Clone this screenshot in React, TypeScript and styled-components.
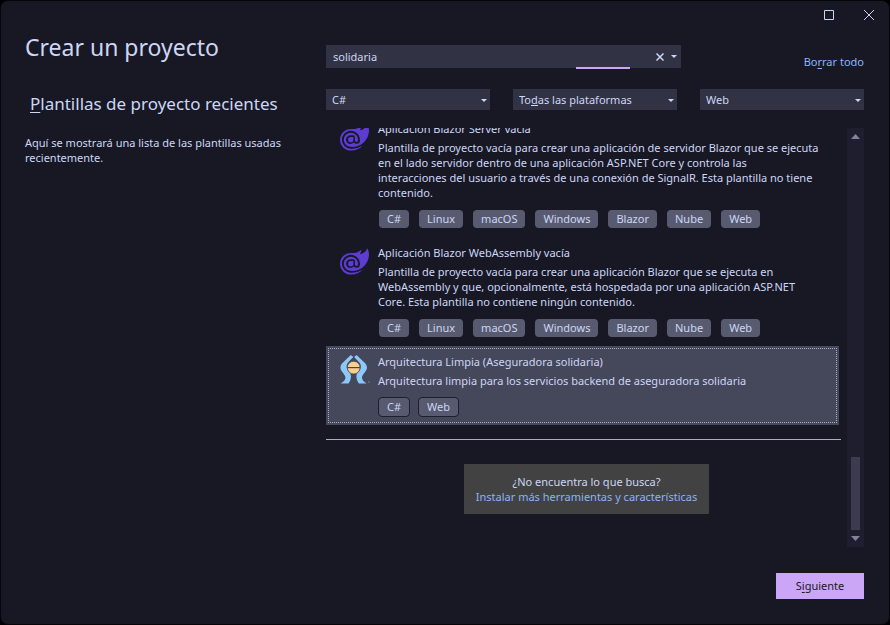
import React, { useState } from 'react';
import styled, { createGlobalStyle } from 'styled-components';
import { SiBlazor } from 'react-icons/si';

const color = {
  base: '#181825',
  track: '#1e1e2e',
  field: '#313244',
  selected: '#45475a',
  chip: '#585b70',
  text: '#cdd6f4',
  link: '#89b4fa',
  accent: '#cba6f7',
};

const GlobalStyle = createGlobalStyle`
  *, *::before, *::after { box-sizing: border-box; }
  body { margin: 0; background: #000; }
  body, button, input, select {
    font-family: "Noto Sans", "Open Sans", sans-serif;
    font-size: 11px;
    line-height: 15px;
    color: ${color.text};
  }
  button { border: 0; padding: 0; background: none; cursor: pointer; }
  h1, h2, h3, p, ul { margin: 0; padding: 0; font-weight: 400; }
`;

const Window = styled.div`
  display: flex;
  flex-direction: column;
  height: 100vh;
  background: ${color.base};
  border: 1px solid #05050a;
  border-radius: 8px;
  overflow: hidden;
`;

const TitleBar = styled.header`
  display: flex;
  justify-content: flex-end;
  height: 28px;
  flex: none;
`;

const WindowButton = styled.button`
  display: grid;
  place-items: center;
  width: 40px;
`;

const Body = styled.div`
  flex: 1;
  min-height: 0;
  display: grid;
  grid-template-columns: 301px minmax(0, 1fr);
  padding: 0 25px 0 24px;
`;

const Sidebar = styled.aside`
  padding-right: 24px;
`;

const Title = styled.h1`
  font-size: 23px;
  line-height: 32px;
  padding-top: 2px;
`;

const Subtitle = styled.h2`
  font-size: 17px;
  line-height: 24px;
  padding-left: 5px;
  margin: 29px 0 19px;
  white-space: nowrap;
`;

const AccessKey = styled.span`
  text-decoration: underline;
  text-underline-offset: 2px;
  text-decoration-thickness: 1px;
`;

const Main = styled.main`
  display: flex;
  flex-direction: column;
  min-height: 0;
  padding-top: 16px;
`;

const SearchRow = styled.div`
  display: flex;
  justify-content: space-between;
  align-items: flex-start;
  height: 25px;
  flex: none;
`;

const SearchBox = styled.div`
  position: relative;
  display: flex;
  align-items: center;
  width: 66%;
  height: 23px;
  padding-right: 3px;
  background: ${color.field};
`;

const SearchInput = styled.input`
  flex: 1;
  min-width: 0;
  height: 23px;
  padding: 0 7px;
  border: 0;
  outline: 0;
  background: none;
`;

const SearchButton = styled.button<{ $width: number }>`
  display: grid;
  place-items: center;
  width: ${(p) => p.$width}px;
  height: 23px;
`;

const SearchProgress = styled.div`
  position: absolute;
  left: 250px;
  bottom: -1px;
  width: 54px;
  height: 2px;
  background: ${color.accent};
`;

const Link = styled.a`
  color: ${color.link};
  text-decoration: none;
`;

const ClearLink = styled(Link)`
  padding-top: 9px;
`;

const Filters = styled.div`
  display: grid;
  grid-template-columns: repeat(3, minmax(0, 1fr));
  gap: 23px;
  margin: 19px 0 18px;
  flex: none;
`;

const SelectBox = styled.div`
  position: relative;
  display: flex;

  svg {
    position: absolute;
    right: 3px;
    top: 10px;
    pointer-events: none;
  }
`;

const Select = styled.select`
  appearance: none;
  width: 100%;
  height: 21px;
  padding: 0 18px 0 6px;
  border: 0;
  border-radius: 0;
  outline: 0;
  background: ${color.field};
`;

const KeyMark = styled.span`
  position: absolute;
  left: 18px;
  bottom: 4px;
  width: 7px;
  height: 1px;
  background: ${color.text};
`;

const Results = styled.div`
  display: flex;
  flex: 1;
  min-height: 0;
`;

/* Reversed column keeps the view anchored to the end of the list. */
const Scroller = styled.div`
  display: flex;
  flex-direction: column-reverse;
  flex: 1;
  min-width: 0;
  overflow-y: auto;
  scrollbar-width: none;
`;

const List = styled.ul`
  list-style: none;
  margin-right: 8px;
`;

const Chips = styled.div`
  display: flex;
  flex-wrap: wrap;
  gap: 8px;
  margin-top: 9px;
`;

const Chip = styled.span`
  padding: 0 8px;
  border: 1px solid ${color.base};
  border-radius: 4px;
  background: ${color.chip};
  background-clip: padding-box;
  line-height: 18px;
`;

const Item = styled.li<{ $selected?: boolean }>`
  display: flex;
  gap: 8px;
  padding: 8px 10px 8px 12px;
  background: ${(p) => (p.$selected ? color.selected : 'transparent')};
  outline: ${(p) => (p.$selected ? '1px dotted #a6adc8' : 'none')};
  outline-offset: -3px;

  ${Chip} {
    border-color: ${(p) => (p.$selected ? '#1e1e2e' : color.base)};
  }
`;

const ItemIcon = styled.div`
  display: grid;
  place-items: center;
  flex: none;
  width: 32px;
  height: 32px;
  color: #5d3cd2;
`;

const ItemText = styled.div`
  flex: 1;
  min-width: 0;
`;

const ItemName = styled.h3`
  font-size: 11px;
  line-height: 16px;
  margin-bottom: 3px;
`;

const ItemDescription = styled.p`
  white-space: pre-line;
`;

const Separator = styled.hr`
  margin: 14px 6px 24px 0;
  border: 0;
  height: 1px;
  background: #a6adc8;
`;

const HelpBox = styled.div`
  width: 245px;
  margin: 0 auto 33px;
  padding: 10px 0;
  background: #424242;
  text-align: center;
`;

const ScrollBar = styled.div`
  display: flex;
  flex-direction: column;
  width: 17px;
  background: ${color.track};
`;

const ScrollButton = styled.button`
  display: grid;
  place-items: center;
  height: 17px;
`;

const ScrollTrack = styled.div`
  display: flex;
  flex: 1;
  align-items: flex-end;
  justify-content: center;
`;

const ScrollThumb = styled.div`
  width: 9px;
  height: 73px;
  background: #3b3c50;
`;

const Footer = styled.footer`
  display: flex;
  justify-content: flex-end;
  flex: none;
  padding: 26px 25px 25px;
`;

const PrimaryButton = styled.button`
  width: 88px;
  height: 26px;
  padding-bottom: 2px;
  background: ${color.accent};
  color: ${color.base};
`;

const Caret = () => (
  <svg width="6" height="3" viewBox="0 0 6 3" fill={color.text} aria-hidden="true">
    <path d="M0 0h6L3 3z" />
  </svg>
);

const BlazorIcon = () => <SiBlazor size={29} aria-hidden="true" />;

const SolidariaIcon = () => (
  <svg width="32" height="32" viewBox="0 0 32 32" aria-hidden="true">
    <g fill="#8cc8fa">
      <path d="M12.8 1 L15.3 3 L10 8.6 C8.4 10.6 8.2 13 9.2 15.2 C10.4 17.6 13 19 13 22.4 C13 25.4 11.6 27.6 10.6 29.5 H2.6 C4.6 28.4 7.4 26.6 7.4 23.6 C7.4 20.4 2.4 17.6 2.4 13.6 C2.4 11.4 3.6 9.8 5 8.4z" />
      <path d="M18.6 1 L16.100 3 L21.400 8.600 C23 10.600 23.200 13 22.200 15.200 C21 17.600 18.400 19 18.400 22.400 C18.400 25.400 19.800 27.600 20.800 29.500 H28.800 C26.800 28.400 24 26.600 24 23.600 C24 20.400 29 17.600 29 13.600 C29 11.400 27.800 9.800 26.400 8.400z" />
    </g>
    <circle cx="15.7" cy="13.6" r="6.4" fill="#f9cf8e" stroke="#45475a" strokeWidth="0.8" />
    <path d="M9.4 13.6h12.6" stroke="#4a4650" strokeWidth="1.2" />
    <circle cx="31" cy="28" r="0.9" fill="#6c7086" />
  </svg>
);

interface Template {
  name: string;
  description: string;
  tags: string[];
  icon: React.ReactNode;
}

const blazorTags = ['C#', 'Linux', 'macOS', 'Windows', 'Blazor', 'Nube', 'Web'];

const templates: Template[] = [
  {
    name: 'Aplicación Blazor Server vacía',
    description:
      'Plantilla de proyecto vacía para crear una aplicación de servidor Blazor que se ejecuta\nen el lado servidor dentro de una aplicación ASP.NET Core y controla las\ninteracciones del usuario a través de una conexión de SignalR. Esta plantilla no tiene\ncontenido.',
    tags: blazorTags,
    icon: <BlazorIcon />,
  },
  {
    name: 'Aplicación Blazor WebAssembly vacía',
    description:
      'Plantilla de proyecto vacía para crear una aplicación Blazor que se ejecuta en\nWebAssembly y que, opcionalmente, está hospedada por una aplicación ASP.NET\nCore. Esta plantilla no contiene ningún contenido.',
    tags: blazorTags,
    icon: <BlazorIcon />,
  },
  {
    name: 'Arquitectura Limpia (Aseguradora solidaria)',
    description: 'Arquitectura limpia para los servicios backend de aseguradora solidaria',
    tags: ['C#', 'Web'],
    icon: <SolidariaIcon />,
  },
];

export default function App() {
  const [query, setQuery] = useState('solidaria');
  const [selected, setSelected] = useState(2);

  return (
    <Window>
      <GlobalStyle />
      <TitleBar>
        <WindowButton aria-label="Maximizar">
          <svg width="10" height="10" viewBox="0 0 10 10" fill="none" stroke={color.text}>
            <path d="M.5.5h9v9h-9z" />
          </svg>
        </WindowButton>
        <WindowButton aria-label="Cerrar">
          <svg width="10" height="10" viewBox="0 0 10 10" stroke={color.text}>
            <path d="M0 0l10 10M10 0L0 10" />
          </svg>
        </WindowButton>
      </TitleBar>

      <Body>
        <Sidebar>
          <Title>Crear un proyecto</Title>
          <Subtitle>
            <AccessKey>P</AccessKey>lantillas de proyecto recientes
          </Subtitle>
          <p>Aquí se mostrará una lista de las plantillas usadas recientemente.</p>
        </Sidebar>

        <Main>
          <SearchRow>
            <SearchBox>
              <SearchInput
                aria-label="Buscar plantillas"
                value={query}
                onChange={(e) => setQuery(e.target.value)}
              />
              <SearchButton $width={20} aria-label="Borrar búsqueda" onClick={() => setQuery('')}>
                <svg width="8" height="8" viewBox="0 0 8 8" stroke={color.text} strokeWidth="1.5">
                  <path d="M.5.5l7 7M7.5.5l-7 7" />
                </svg>
              </SearchButton>
              <SearchButton $width={8} aria-label="Búsquedas recientes">
                <Caret />
              </SearchButton>
              <SearchProgress />
            </SearchBox>
            <ClearLink href="#">
              Bo<AccessKey>r</AccessKey>rar todo
            </ClearLink>
          </SearchRow>

          <Filters>
            <SelectBox>
              <Select aria-label="Lenguaje">
                <option>C#</option>
              </Select>
              <Caret />
            </SelectBox>
            <SelectBox>
              <Select aria-label="Plataforma">
                <option>Todas las plataformas</option>
              </Select>
              <KeyMark />
              <Caret />
            </SelectBox>
            <SelectBox>
              <Select aria-label="Tipo de proyecto">
                <option>Web</option>
              </Select>
              <Caret />
            </SelectBox>
          </Filters>

          <Results>
            <Scroller>
              <div>
                <List>
                  {templates.map((t, i) => (
                    <Item key={t.name} $selected={i === selected} onClick={() => setSelected(i)}>
                      <ItemIcon>{t.icon}</ItemIcon>
                      <ItemText>
                        <ItemName>{t.name}</ItemName>
                        <ItemDescription>{t.description}</ItemDescription>
                        <Chips>
                          {t.tags.map((tag) => (
                            <Chip key={tag}>{tag}</Chip>
                          ))}
                        </Chips>
                      </ItemText>
                    </Item>
                  ))}
                </List>
                <Separator />
                <HelpBox>
                  <p>¿No encuentra lo que busca?</p>
                  <Link href="#">Instalar más herramientas y características</Link>
                </HelpBox>
              </div>
            </Scroller>
            <ScrollBar>
              <ScrollButton aria-label="Desplazar hacia arriba">
                <svg width="9" height="5" viewBox="0 0 9 5" fill="#7f849c">
                  <path d="M0 5h9L4.5 0z" />
                </svg>
              </ScrollButton>
              <ScrollTrack>
                <ScrollThumb />
              </ScrollTrack>
              <ScrollButton aria-label="Desplazar hacia abajo">
                <svg width="9" height="5" viewBox="0 0 9 5" fill="#7f849c">
                  <path d="M0 0h9L4.5 5z" />
                </svg>
              </ScrollButton>
            </ScrollBar>
          </Results>
        </Main>
      </Body>

      <Footer>
        <PrimaryButton>
          S<AccessKey>i</AccessKey>guiente
        </PrimaryButton>
      </Footer>
    </Window>
  );
}
